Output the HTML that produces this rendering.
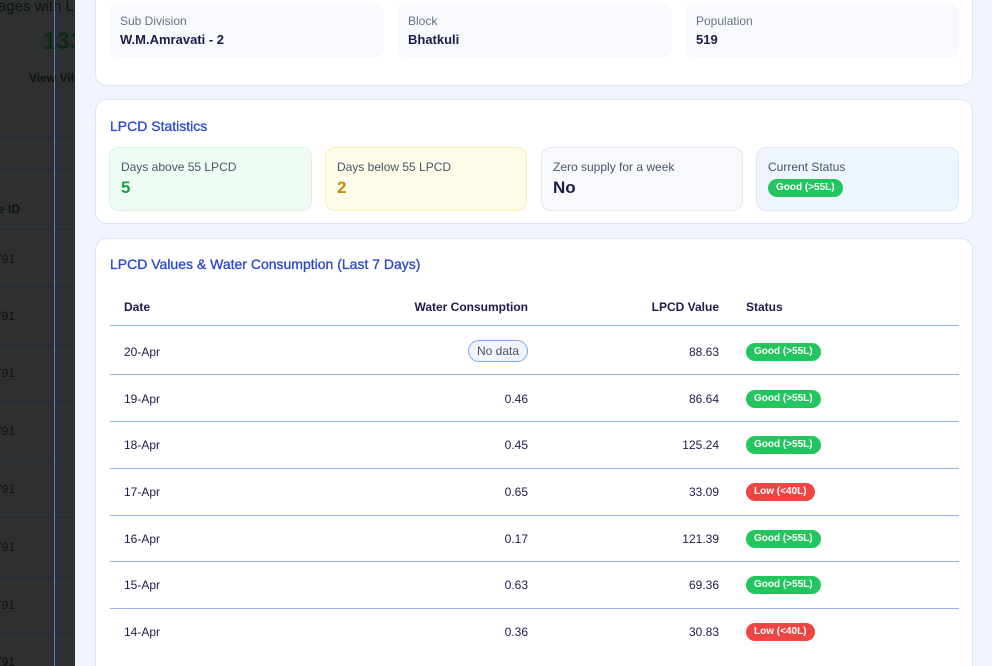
<!DOCTYPE html>
<html style="overflow:hidden;width:992px;height:666px"><head><style>
*{box-sizing:border-box;margin:0;padding:0}
body{width:992px;height:666px;overflow:hidden;background:#f0f5fd;font-family:"Liberation Sans",sans-serif;position:relative;color:#1e1b4b}
.ov{position:absolute;left:0;top:0;width:75px;height:666px;background:#2e302f;overflow:hidden;color:#111a14}
.ov .l{position:absolute;left:0;width:75px;height:1px;background:#1f2a3a}
.ov .t{position:absolute;font-size:12px;color:#0e1310;white-space:nowrap}
.vline{position:absolute;left:54px;top:0;width:1px;height:666px;background:#4d7fe0}
.card{position:absolute;left:95px;width:878px;background:#fff;border:1px solid #dbe5f6;border-radius:12px}
.box{position:absolute;border-radius:10px;background:#f7f9fc;padding:11px 11px}
.box .k{font-size:12px;color:#64748b}
.box .v{font-size:13px;font-weight:bold;color:#1e1b4b;margin-top:4px}
h3{position:absolute;left:14px;font-size:14px;font-weight:normal;color:#2747d0;-webkit-text-stroke:0.3px #2747d0}
.st{position:absolute;top:47px;height:64px;border-radius:10px;padding:12px 11px;font-size:12px;color:#475569}
.st .n{font-size:17px;font-weight:bold;margin-top:4px}
.pill{display:inline-block;border-radius:10px;color:#fff;font-size:10px;font-weight:bold;padding:3px 8px;line-height:12px}
.g{background:#22c55e}.r{background:#ef4444}
.row{position:absolute;left:14px;width:849px;font-size:12px;color:#1e1b4b}
.row span{position:absolute;white-space:nowrap}
.hl{position:absolute;left:14px;width:849px;height:1px;background:#93b4f0}
</style></head><body>
<div class="ov">
<div class="t" style="left:-2px;top:-2px;font-size:15px">ages with L</div>
<div class="t" style="left:43px;top:28px;font-size:24px;font-weight:bold;color:#0d2a18">133</div>
<div class="t" style="left:29px;top:71px;font-weight:bold">View Vill</div>
<div class="l" style="top:136px"></div><div class="l" style="top:168px"></div>
<div class="t" style="left:-2px;top:202px;font-weight:bold">e ID</div>
<div class="l" style="top:229px"></div><div class="l" style="top:287px"></div><div class="l" style="top:344px"></div><div class="l" style="top:401px"></div><div class="l" style="top:460px"></div><div class="l" style="top:517px"></div><div class="l" style="top:576px"></div><div class="l" style="top:633px"></div>
<div class="t" style="left:-5px;top:252px">791</div><div class="t" style="left:-5px;top:309px">791</div><div class="t" style="left:-5px;top:366px">791</div><div class="t" style="left:-5px;top:424px">791</div><div class="t" style="left:-5px;top:482px">791</div><div class="t" style="left:-5px;top:540px">791</div><div class="t" style="left:-5px;top:598px">791</div><div class="t" style="left:-5px;top:655px">791</div>
</div>
<div class="vline"></div>

<div class="card" style="top:-12px;height:98px">
<div class="box" style="left:13px;top:14px;width:275px;height:55px"><div class="k">Sub Division</div><div class="v">W.M.Amravati - 2</div></div>
<div class="box" style="left:301px;top:14px;width:275px;height:55px"><div class="k">Block</div><div class="v">Bhatkuli</div></div>
<div class="box" style="left:589px;top:14px;width:274px;height:55px"><div class="k">Population</div><div class="v">519</div></div>
</div>

<div class="card" style="top:99px;height:125px">
<h3 style="top:18px">LPCD Statistics</h3>
<div class="st" style="left:13px;width:203px;background:#effcf3;border:1px solid #d6f5df">Days above 55 LPCD<div class="n" style="color:#16a34a">5</div></div>
<div class="st" style="left:229px;width:202px;background:#fefbe8;border:1px solid #fbefb0">Days below 55 LPCD<div class="n" style="color:#ca8a04">2</div></div>
<div class="st" style="left:445px;width:202px;background:#f7f9fc;border:1px solid #e2e8f0">Zero supply for a week<div class="n" style="color:#1e1b4b">No</div></div>
<div class="st" style="left:660px;width:203px;background:#eff5ff;border:1px solid #dbe6fa">Current Status<div style="margin-top:5px"><span class="pill g">Good (&gt;55L)</span></div></div>
</div>

<div class="card" style="top:238px;height:428px;border-bottom:none;border-radius:12px 12px 0 0">
<h3 style="top:17px">LPCD Values &amp; Water Consumption (Last 7 Days)</h3>
<div class="row" style="top:61px;font-weight:bold"><span style="left:14px">Date</span><span style="right:431px">Water Consumption</span><span style="right:240px">LPCD Value</span><span style="left:636px">Status</span></div>
<div class="hl" style="top:86px"></div>
<div class="row" style="top:106px"><span style="left:14px">20-Apr</span><span style="right:431px;top:-5px;border:1px solid #7fa6ee;background:#f1f5fb;border-radius:11px;padding:3px 8px;color:#475569">No data</span><span style="right:240px">88.63</span><span style="left:636px;top:-2px" class="pill g">Good (&gt;55L)</span></div>
<div class="hl" style="top:135px"></div>
<div class="row" style="top:153px"><span style="left:14px">19-Apr</span><span style="right:431px">0.46</span><span style="right:240px">86.64</span><span style="left:636px;top:-2px" class="pill g">Good (&gt;55L)</span></div>
<div class="hl" style="top:182px"></div>
<div class="row" style="top:199px"><span style="left:14px">18-Apr</span><span style="right:431px">0.45</span><span style="right:240px">125.24</span><span style="left:636px;top:-2px" class="pill g">Good (&gt;55L)</span></div>
<div class="hl" style="top:229px"></div>
<div class="row" style="top:246px"><span style="left:14px">17-Apr</span><span style="right:431px">0.65</span><span style="right:240px">33.09</span><span style="left:636px;top:-2px" class="pill r">Low (&lt;40L)</span></div>
<div class="hl" style="top:276px"></div>
<div class="row" style="top:293px"><span style="left:14px">16-Apr</span><span style="right:431px">0.17</span><span style="right:240px">121.39</span><span style="left:636px;top:-2px" class="pill g">Good (&gt;55L)</span></div>
<div class="hl" style="top:322px"></div>
<div class="row" style="top:339px"><span style="left:14px">15-Apr</span><span style="right:431px">0.63</span><span style="right:240px">69.36</span><span style="left:636px;top:-2px" class="pill g">Good (&gt;55L)</span></div>
<div class="hl" style="top:369px"></div>
<div class="row" style="top:386px"><span style="left:14px">14-Apr</span><span style="right:431px">0.36</span><span style="right:240px">30.83</span><span style="left:636px;top:-2px" class="pill r">Low (&lt;40L)</span></div>
</div>
</body></html>
